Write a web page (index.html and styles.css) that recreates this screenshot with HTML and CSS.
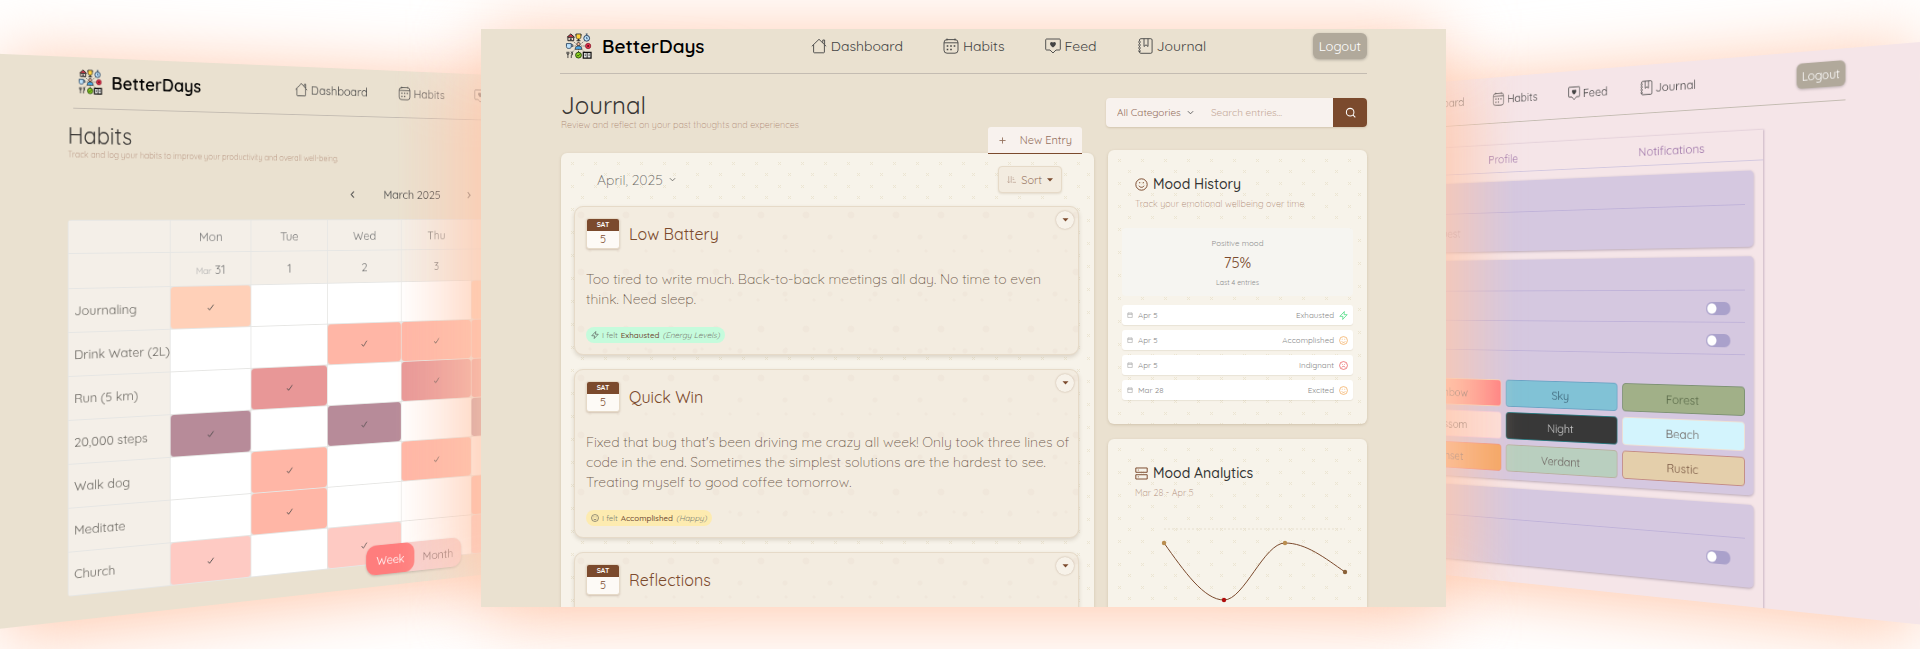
FILE: index.html
```html
<!DOCTYPE html>
<html lang="en">
<head>
<meta charset="utf-8">
<meta name="viewport" content="width=device-width, initial-scale=1">
<title>BetterDays</title>
<link rel="stylesheet" href="styles.css">
</head>
<body>
<svg class="sprite" aria-hidden="true">
  <symbol id="logo" viewBox="0 0 54 54">
    <g stroke="#333" stroke-width="1.2" stroke-dasharray="3 2"><path d="M27 27 11 13M27 27 43 13M27 27V12M27 27H10M27 27H44M27 27 11 43M27 27 43 43M27 27V44"/></g>
    <path d="M3 9 11 2l8 7" fill="#d33a4a" stroke="#222" stroke-width="2"/><path d="M5 9h12v7H5z" fill="#f3ded2" stroke="#222" stroke-width="2"/><path d="M9 11h4v5H9z" fill="#444"/>
    <path d="M22 2h10v5c0 4-2 6-5 6s-5-2-5-6zM20 4h2m10 0h2" fill="#ffd23c" stroke="#222" stroke-width="1.6"/><path d="M27 12v3m-4 1h8" stroke="#222" stroke-width="2"/>
    <circle cx="44" cy="11" r="6" fill="#bfe2fb" stroke="#24415f" stroke-width="2"/><path d="M44 2v3M42 2h4M44 8v4h2" stroke="#24415f" stroke-width="1.6" fill="none"/>
    <path d="M2 22h10v6c0 2-1 4-4 4H6c-3 0-4-2-4-4z" fill="#bfe2fb" stroke="#24415f" stroke-width="1.8"/><path d="M12 24h3v4h-3" fill="none" stroke="#24415f" stroke-width="1.6"/>
    <circle cx="27" cy="23" r="3.4" fill="#f2b99b" stroke="#222" stroke-width="1.4"/><path d="M20 34c0-5 3-7 7-7s7 2 7 7z" fill="#4aa8e8" stroke="#222" stroke-width="1.4"/>
    <circle cx="47" cy="27" r="5.5" fill="#e2324a" stroke="#7a1226" stroke-width="1.4"/><circle cx="47" cy="27" r="2" fill="#5d0d1c"/>
    <path d="M3 39v4c0 2 4 2 4 0v-4M5 39v13M11 39c4 1 4 6 1 7v6M14 39v7" fill="none" stroke="#333" stroke-width="1.8"/>
    <circle cx="27" cy="46" r="6" fill="#8ed321" stroke="#1d3b0a" stroke-width="1.8"/><path d="m24 46 2 2 4-4M27 38v2" fill="none" stroke="#1d3b0a" stroke-width="1.6"/>
    <path d="M37 40h16v12H37z" fill="#eee" stroke="#111" stroke-width="2.6"/><path d="M45 40v12M40 44h2M40 47h2M48 44h2M48 47h2" stroke="#111" stroke-width="1.8"/>
  </symbol>
  <symbol id="home" viewBox="0 0 16 16"><path d="M.8 8.300 8 1.300l7.200 7M2.600 6.800V14c0 .5.300.8.800.8h9.200c.5 0 .8-.300.800-.800V6.800M11.800 4.800V2h1.800v4.600" fill="none" stroke="currentColor" stroke-width=".9" stroke-linejoin="round"/></symbol>
  <symbol id="cal" viewBox="0 0 16 16"><rect x="1" y="1.600" width="14" height="13.600" rx="3" fill="none" stroke="currentColor" stroke-width=".9"/><path d="M1 4.800h14M4 .5v2M12 .5v2" stroke="currentColor" stroke-width=".9"/><path d="M7.200 8h1.600M10.700 8h1.600M3.700 11.500h1.600M7.200 11.500h1.600M3.700 8h1.600" stroke="currentColor" stroke-width="1.500"/></symbol>
  <symbol id="feed" viewBox="0 0 16 16"><path d="M1.500 1h13c.4 0 .8.400.8.800v9.400c0 .4-.4.800-.8.800H11l-3 3-3-3H1.500c-.4 0-.8-.400-.8-.800V1.800c0-.4.400-.800.800-.800z" fill="none" stroke="currentColor" stroke-width=".9"/><path d="M8 9.600C3 6.500 5.500 2.600 8 4.600c2.500-2 5 1.900 0 5z" fill="currentColor"/></symbol>
  <symbol id="book" viewBox="0 0 16 16"><path d="M2.500 3V2c0-.8.500-1.300 1.300-1.300h10c.8 0 1.300.500 1.300 1.300v12c0 .8-.500 1.300-1.300 1.300h-10c-.8 0-1.300-.500-1.300-1.300v-1M2.500 5v1M2.500 8v1M2.500 11v1M1 4h3M1 7h3M1 10h3M1 13h3M7 .7V8.500l2-1.700 2 1.700V.7" fill="none" stroke="currentColor" stroke-width=".9"/></symbol>
  <symbol id="smile" viewBox="0 0 16 16"><circle cx="8" cy="8" r="7" fill="none" stroke="currentColor" stroke-width="1.200"/><path d="M4.800 9.500c1.200 2.600 5.200 2.600 6.400 0M5.800 5v1.500M10.200 5v1.500" fill="none" stroke="currentColor" stroke-width="1.200"/></symbol>
  <symbol id="frown" viewBox="0 0 16 16"><circle cx="8" cy="8" r="7" fill="none" stroke="currentColor" stroke-width="1.200"/><path d="M4.800 11.500c1.200-2.600 5.200-2.600 6.400 0M5 5l1.500 1.500M11 5 9.500 6.500" fill="none" stroke="currentColor" stroke-width="1.200"/></symbol>
  <symbol id="bolt" viewBox="0 0 16 16"><path d="M9.500 1 1.500 9.500H7L6.500 15l8-8.500H9z" fill="none" stroke="currentColor" stroke-width="1.300" stroke-linejoin="round"/></symbol>
  <symbol id="day" viewBox="0 0 16 16"><path d="M2 3h12v11.500H2zM2 6.500h12M5 1v3M11 1v3" fill="none" stroke="currentColor" stroke-width="1.200"/></symbol>
  <symbol id="rows" viewBox="0 0 16 16"><path d="M1 1.200h14v5.300H1zM1 9.500h14v5.300H1zM3.500 3.800h1M3.500 12.100h1" fill="none" stroke="currentColor" stroke-width="1.200"/></symbol>
  <symbol id="search" viewBox="0 0 16 16"><circle cx="7.500" cy="7.500" r="5.500" fill="none" stroke="currentColor" stroke-width="1.500"/><path d="m11.500 11.500 3.500 3.500" stroke="currentColor" stroke-width="1.500"/></symbol>
  <symbol id="sort" viewBox="0 0 16 16"><path d="M3 2v12M.8 11.500 3 14l2.200-2.500M7.500 2v12M10 5h2M10 8h3M10 13h6" fill="none" stroke="currentColor" stroke-width="1.200"/></symbol>
  <symbol id="down" viewBox="0 0 16 16"><path d="m2 5 6 6 6-6" fill="none" stroke="currentColor" stroke-width="2"/></symbol>
  <symbol id="caret" viewBox="0 0 16 16"><path d="M0 3h16l-8 9z" fill="currentColor"/></symbol>
  <symbol id="tick" viewBox="0 0 16 16"><path d="m2 9 4 4 8-10" fill="none" stroke="currentColor" stroke-width="1.700"/></symbol>
  <symbol id="plus" viewBox="0 0 16 16"><path d="M8 1v14M1 8h14" stroke="currentColor" stroke-width="2"/></symbol>
</svg>

<main class="stage">
  <div class="side side--left">
    <div class="side__glow"></div>
    <section class="panel side__surface" aria-label="Habits">
      <header class="header">
        <a class="brand" href="#"><svg class="brand__logo"><use href="#logo"/></svg>BetterDays</a>
        <nav class="nav">
          <a class="nav__link" href="#"><svg class="nav__icon"><use href="#home"/></svg>Dashboard</a>
          <a class="nav__link" href="#"><svg class="nav__icon"><use href="#cal"/></svg>Habits</a>
          <a class="nav__link" href="#"><svg class="nav__icon"><use href="#feed"/></svg>Feed</a>
          <a class="nav__link" href="#"><svg class="nav__icon"><use href="#book"/></svg>Journal</a>
        </nav>
        <button class="logout" type="button">Logout</button>
      </header>
      <div class="habits">
        <h2 class="title">Habits</h2>
        <p class="subtitle">Track and log your habits to improve your productivity and overall well-being.</p>
        <div class="month">
          <button class="month__arrow" type="button" aria-label="Previous month"><svg class="month__icon month__icon--prev"><use href="#down"/></svg></button>
          <span>March 2025</span>
          <button class="month__arrow" type="button" aria-label="Next month"><svg class="month__icon month__icon--next"><use href="#down"/></svg></button>
        </div>
        <table class="grid">
          <thead>
            <tr class="grid__days"><th class="grid__name"></th><th>Mon</th><th>Tue</th><th>Wed</th><th>Thu</th><th></th><th></th><th></th></tr>
            <tr class="grid__dates"><th></th><th><small>Mar</small> 31</th><th>1</th><th>2</th><th>3</th><th></th><th></th><th></th></tr>
          </thead>
          <tbody>
            <tr><th>Journaling</th><td class="on peach"><svg><use href="#tick"/></svg></td><td></td><td></td><td></td><td class="on peach"></td><td></td><td></td></tr>
            <tr><th>Drink Water (2L)</th><td></td><td></td><td class="on coral"><svg><use href="#tick"/></svg></td><td class="on coral"><svg><use href="#tick"/></svg></td><td class="on coral"></td><td></td><td></td></tr>
            <tr><th>Run (5 km)</th><td></td><td class="on rose"><svg><use href="#tick"/></svg></td><td></td><td class="on rose"><svg><use href="#tick"/></svg></td><td class="on rose"></td><td></td><td></td></tr>
            <tr><th>20,000 steps</th><td class="on plum"><svg><use href="#tick"/></svg></td><td></td><td class="on plum"><svg><use href="#tick"/></svg></td><td></td><td class="on plum"></td><td></td><td></td></tr>
            <tr><th>Walk dog</th><td></td><td class="on coral"><svg><use href="#tick"/></svg></td><td></td><td class="on coral"><svg><use href="#tick"/></svg></td><td></td><td></td><td></td></tr>
            <tr><th>Meditate</th><td></td><td class="on coral"><svg><use href="#tick"/></svg></td><td></td><td></td><td class="on coral"></td><td></td><td></td></tr>
            <tr><th>Church</th><td class="on blush"><svg><use href="#tick"/></svg></td><td></td><td class="on blush"><svg><use href="#tick"/></svg></td><td></td><td class="on blush"></td><td></td><td></td></tr>
          </tbody>
        </table>
      </div>
      <div class="range">
        <button class="range__item range__item--active" type="button">Week</button>
        <button class="range__item" type="button">Month</button>
      </div>
    </section>
  </div>

  <div class="side side--right">
    <div class="side__glow"></div>
    <section class="panel side__surface" aria-label="Settings">
      <header class="header">
        <a class="brand" href="#"><svg class="brand__logo"><use href="#logo"/></svg>BetterDays</a>
        <nav class="nav">
          <a class="nav__link" href="#"><svg class="nav__icon"><use href="#home"/></svg>Dashboard</a>
          <a class="nav__link" href="#"><svg class="nav__icon"><use href="#cal"/></svg>Habits</a>
          <a class="nav__link" href="#"><svg class="nav__icon"><use href="#feed"/></svg>Feed</a>
          <a class="nav__link" href="#"><svg class="nav__icon"><use href="#book"/></svg>Journal</a>
        </nav>
        <button class="logout" type="button">Logout</button>
      </header>
      <div class="settings">
        <div class="tabs"><button class="tab tab--second" type="button">Profile</button><button class="tab" type="button">Notifications</button></div>
        <div class="box"><div class="row row--head"></div><div class="row row--tall"><span class="row__text">Guest</span></div></div>
        <div class="box">
          <div class="row row--head"></div>
          <div class="row"><input class="switch" type="checkbox" aria-label="Option one"></div>
          <div class="row"><input class="switch" type="checkbox" aria-label="Option two"></div>
          <div class="themes">
            <button class="theme theme--rainbow" type="button">Rainbow</button><button class="theme theme--sky" type="button">Sky</button><button class="theme theme--forest" type="button">Forest</button>
            <button class="theme theme--blossom" type="button">Blossom</button><button class="theme theme--night" type="button">Night</button><button class="theme theme--beach" type="button">Beach</button>
            <button class="theme theme--sunset" type="button">Sunset</button><button class="theme theme--verdant" type="button">Verdant</button><button class="theme theme--rustic" type="button">Rustic</button>
          </div>
        </div>
        <div class="box"><div class="row row--head"></div><div class="row row--last"><input class="switch" type="checkbox" aria-label="Option three"></div></div>
      </div>
    </section>
  </div>

  <div class="front">
    <div class="front__glow"></div>
    <section class="panel front__surface" aria-label="Journal">
      <header class="header">
        <a class="brand" href="#"><svg class="brand__logo"><use href="#logo"/></svg>BetterDays</a>
        <nav class="nav">
          <a class="nav__link" href="#"><svg class="nav__icon"><use href="#home"/></svg>Dashboard</a>
          <a class="nav__link" href="#"><svg class="nav__icon"><use href="#cal"/></svg>Habits</a>
          <a class="nav__link" href="#"><svg class="nav__icon"><use href="#feed"/></svg>Feed</a>
          <a class="nav__link" href="#"><svg class="nav__icon"><use href="#book"/></svg>Journal</a>
        </nav>
        <button class="logout" type="button">Logout</button>
      </header>

      <div class="journal">
        <div class="journal__main">
          <h1 class="title">Journal</h1>
          <p class="subtitle">Review and reflect on your past thoughts and experiences</p>
          <button class="new" type="button"><svg class="new__icon"><use href="#plus"/></svg>New Entry</button>
          <div class="card feed">
            <div class="feed__bar">
              <button class="feed__month" type="button">April, 2025 <svg><use href="#down"/></svg></button>
              <button class="sort" type="button"><svg class="sort__icon"><use href="#sort"/></svg>Sort<svg class="sort__caret"><use href="#caret"/></svg></button>
            </div>
            <article class="entry">
              <button class="entry__menu" type="button" aria-label="Entry menu"><svg><use href="#caret"/></svg></button>
              <div class="entry__head"><div class="date"><span class="date__day">SAT</span><span class="date__num">5</span></div><h2 class="entry__title">Low Battery</h2></div>
              <p class="entry__text">Too tired to write much. Back-to-back meetings all day. No time to even think. Need sleep.</p>
              <span class="felt felt--green"><svg><use href="#bolt"/></svg>I felt <b>Exhausted</b> <i>(Energy Levels)</i></span>
            </article>
            <article class="entry">
              <button class="entry__menu" type="button" aria-label="Entry menu"><svg><use href="#caret"/></svg></button>
              <div class="entry__head"><div class="date"><span class="date__day">SAT</span><span class="date__num">5</span></div><h2 class="entry__title">Quick Win</h2></div>
              <p class="entry__text">Fixed that bug that's been driving me crazy all week! Only took three lines of code in the end. Sometimes the simplest solutions are the hardest to see. Treating myself to good coffee tomorrow.</p>
              <span class="felt felt--yellow"><svg><use href="#smile"/></svg>I felt <b>Accomplished</b> <i>(Happy)</i></span>
            </article>
            <article class="entry">
              <button class="entry__menu" type="button" aria-label="Entry menu"><svg><use href="#caret"/></svg></button>
              <div class="entry__head"><div class="date"><span class="date__day">SAT</span><span class="date__num">5</span></div><h2 class="entry__title">Reflections</h2></div>
            </article>
          </div>
        </div>

        <aside class="journal__aside">
          <form class="search">
            <label class="search__cat"><select class="search__select" aria-label="Category"><option>All Categories</option></select><svg><use href="#down"/></svg></label>
            <input class="search__input" type="text" placeholder="Search entries..." aria-label="Search entries">
            <button class="search__go" type="button" aria-label="Search"><svg><use href="#search"/></svg></button>
          </form>
          <section class="card mood">
            <h2 class="mood__title"><svg><use href="#smile"/></svg>Mood History</h2>
            <p class="subtitle mood__sub">Track your emotional wellbeing over time</p>
            <div class="stat"><span>Positive mood</span><strong>75%</strong><small>Last 4 entries</small></div>
            <ul class="log">
              <li><svg><use href="#day"/></svg>Apr 5<span>Exhausted</span><svg class="green"><use href="#bolt"/></svg></li>
              <li><svg><use href="#day"/></svg>Apr 5<span>Accomplished</span><svg class="orange"><use href="#smile"/></svg></li>
              <li><svg><use href="#day"/></svg>Apr 5<span>Indignant</span><svg class="red"><use href="#frown"/></svg></li>
              <li><svg><use href="#day"/></svg>Mar 28<span>Excited</span><svg class="orange"><use href="#smile"/></svg></li>
            </ul>
          </section>
          <section class="card mood">
            <h2 class="mood__title"><svg><use href="#rows"/></svg>Mood Analytics</h2>
            <p class="subtitle mood__sub">Mar 28 - Apr 5</p>
            <svg class="chart" viewBox="0 0 231 90" role="img" aria-label="Mood chart">
              <path d="M42 10H223" stroke="#e6dfcf" stroke-dasharray="2 2"/>
              <path d="M42 24C62 52 82 81 102 81S142 24 163 24 203 39 223 53" fill="none" stroke="#7b4a2d" stroke-width="1"/>
              <circle cx="42" cy="24" r="2.200" fill="#b98d4f"/><circle cx="102" cy="81" r="2.200" fill="#b00d0d"/><circle cx="163" cy="24" r="2.200" fill="#b98d4f"/><circle cx="223" cy="53" r="2.200" fill="#8a6138"/>
            </svg>
          </section>
        </aside>
      </div>
    </section>
  </div>
</main>
</body>
</html>
```

FILE: styles.css
```css
* { box-sizing: border-box; }
body {
  margin: 0;
  background: #fff;
  font-family: Quicksand, Lato, "Open Sans", sans-serif;
  font-size: 14px;
  color: #444;
}
h1, h2, p, ul { margin: 0; padding: 0; font-weight: 400; }
ul { list-style: none; }
a { color: inherit; text-decoration: none; }
button, input, select { font: inherit; color: inherit; border: 0; background: none; padding: 0; margin: 0; }
.sprite { display: none; }

.panel { overflow: hidden; background: #eae1d0; padding: 4px 79px 0; }

/* Stage: one flat panel between two panels turned in perspective */
.stage {
  position: relative;
  display: grid;
  grid-template-columns: 481fr 965fr 474fr;
  height: 100vh;
  min-height: 600px;
  padding: 29px 0 42px;
  overflow: hidden;
}
.front { grid-column: 2; position: relative; min-height: 0; }
.front__surface { position: relative; height: 100%; }
.front__glow, .side__glow {
  position: absolute;
  inset: 4px 4px -10px 4px;
  background: #ffc8ac;
  filter: blur(36px);
}
.side { position: absolute; width: calc(50% + 5px); }
.side__surface { position: relative; height: 100%; padding-top: 12px; }
.side--left {
  left: 0;
  top: 53px;
  bottom: 18px;
  transform-origin: -20px 160px;
  transform: perspective(1000px) rotateY(15deg);
}
.side--left .side__surface { mask-image: linear-gradient(to right, #000 48%, transparent 75%); }
.side--left .nav { margin-left: 12px; }
.side--right {
  right: -1px;
  top: 44px;
  bottom: 27px;
  transform-origin: calc(100% - 25px) 257px;
  transform: perspective(1000px) rotateY(-18deg);
}
.side--right .side__surface {
  background: #f5e5e8;
  mask-image: linear-gradient(to left, #000 50%, transparent 73%);
}
.side--right .nav { margin-right: 20px; }

/* Header */
.header {
  display: flex;
  align-items: center;
  justify-content: space-between;
  padding-bottom: 14px;
  border-bottom: 1px solid #c4bcb2;
}
.brand { display: flex; align-items: center; gap: 10px; padding-left: 5px; font-size: 19px; line-height: 26px; font-weight: 600; color: #000; }
.brand__logo { width: 27px; height: 26px; }
.nav { display: flex; gap: 40px; }
.nav__link { display: flex; align-items: center; gap: 4px; font-size: 14px; line-height: 18px; }
.nav__icon { width: 16px; height: 16px; }
.logout {
  height: 26px;
  padding: 0 6px;
  border-radius: 6px;
  background: #b1a99b;
  color: #fff;
  font-size: 13px;
  box-shadow: 0 1px 3px rgba(0, 0, 0, .25);
}
.title { font-size: 24px; line-height: 28px; color: #3a3836; }
.subtitle { font-size: 9px; line-height: 12px; font-weight: 300; color: #b08b77; }

/* Habits */
.habits { margin: 0 36px 0 -6px; padding-top: 13px; }
.month { display: flex; align-items: center; justify-content: center; gap: 34px; height: 40px; margin: 13px 0 8px 49px; }
.month__arrow { width: 10px; height: 14px; }
.month__icon { width: 9px; height: 9px; display: block; }
.month__icon--prev { transform: rotate(90deg); }
.month__icon--next { transform: rotate(-90deg); }
.grid { width: 100%; table-layout: fixed; border-collapse: separate; border-spacing: 1px; background: #e6e6e4; border-radius: 4px; color: #777; font-size: 14px; }
.grid th, .grid td { height: 44px; padding: 0; font-weight: 400; text-align: center; background: #f4efe8; }
.grid tbody td { background: #fff; }
.grid tbody th { text-align: left; padding-left: 6px; font-size: 14px; white-space: nowrap; color: #6b6862; }
.grid .grid__name { width: 113px; }
.grid .grid__days th { height: 33px; }
.grid .grid__dates th { height: 35px; }
.grid small { font-size: 10px; color: #aaa; }
.grid td svg { width: 9px; height: 9px; color: #444; }
.grid td.on { border-radius: 4px; }
.grid td.peach { background: #ffd0b8; }
.grid td.coral { background: #ffb6a6; }
.grid td.rose { background: #e89797; }
.grid td.plum { background: #b78b99; }
.grid td.blush { background: #fecac3; }
.range {
  position: absolute;
  left: 426px;
  bottom: 13px;
  display: flex;
  background: #f7d0ce;
  border-radius: 12px;
  box-shadow: 0 1px 3px rgba(0, 0, 0, .2);
}
.range__item { width: 63px; height: 33px; border-radius: 12px; color: #8d6d6c; }
.range__item--active { background: #ff7d7d; color: #fff; }

/* Settings */
.settings { margin: 25px 92px 0 60px; padding: 0 11px; height: 600px; box-shadow: 1px 0 2px rgba(90, 60, 110, .3); }
.tabs { display: grid; grid-template-columns: repeat(3, 1fr); margin: 0 -11px 10px; border-bottom: 1px solid #d3c8df; }
.tab { height: 31px; color: #9a70a6; }
.tab--second { grid-column: 2; }
.box { margin-bottom: 10px; padding: 0 10px; border-radius: 5px; background: #d5c8e0; box-shadow: 0 1px 3px rgba(60, 40, 80, .35); }
.row { display: flex; align-items: center; justify-content: flex-end; height: 34px; padding-right: 17px; border-bottom: 1px solid #c0b3d9; }
.row--head { height: 36px; }
.box:nth-of-type(3) .row { padding-top: 4px; }
.row--tall { height: 44px; justify-content: flex-start; border: 0; padding-left: 210px; color: #a893a8; }
.row--last { height: 51px; border: 0; padding-bottom: 8px; }
.switch { appearance: none; width: 29px; height: 14px; border-radius: 7px; background: radial-gradient(circle at 7px 7px, #fff 5px, transparent 6px), #aaa1cb; }
.themes { display: grid; grid-template-columns: repeat(4, 1fr); gap: 6px; padding: 33px 0 9px; }
.theme { height: 31px; border: 1px solid #c9b4d6; border-radius: 4px; color: #6d6460; }
.theme--rainbow, .theme--blossom, .theme--sunset { grid-column: 2; }
.theme--rainbow { background: linear-gradient(90deg, #ffe0b0, #ff7d80); border-color: #f5d2b8; }
.theme--sky { background: #81c2d6; border-color: #6ba3c4; color: #41687c; }
.theme--forest { background: #a1b088; border-color: #7e9275; color: #586847; }
.theme--blossom { background: #fce0dc; border-color: #f6cfe0; }
.theme--night { background: #383838; border-color: #2d7a80; color: #ccc; }
.theme--beach { background: #d3f4fd; border-color: #eee0d4; }
.theme--sunset { background: #f4a45f; border-color: #f0907a; }
.theme--verdant { background: #b9cfbf; border-color: #b9b0a0; }
.theme--rustic { background: #e4cfab; border-color: #c38c86; color: #7b5a45; }

/* Journal */
.journal { display: grid; grid-template-columns: 533fr 259fr; gap: 14px; padding: 17px 0 0 1px; }
.journal__main { display: flex; flex-direction: column; }
.card {
  border-radius: 6px;
  box-shadow: 0 1px 3px rgba(120, 90, 50, .22);
  background: #f7f3ea url("data:image/svg+xml,%3Csvg xmlns='http://www.w3.org/2000/svg' width='23' height='23'%3E%3Cpath d='M10 9l3 3m0-3l-3 3M20 20l3 3m0-3l-3 3' stroke='%23ece5d2' fill='none'/%3E%3C/svg%3E");
}
.new {
  align-self: flex-end;
  position: relative;
  display: flex;
  align-items: center;
  gap: 14px;
  height: 27px;
  margin: -4px 12px -1px 0;
  padding: 0 10px 0 11px;
  border-bottom: 1px solid #7b4a2d;
  border-radius: 3px 3px 0 0;
  background: #f8f2ee;
  color: #94705d;
  font-size: 11px;
}
.new__icon { width: 7px; height: 7px; }
.feed { padding: 13px 15px 20px 13px; }
.feed__bar { display: flex; align-items: center; justify-content: space-between; height: 27px; margin: 0 17px 13px 23px; }
.feed__month { font-size: 14px; font-weight: 300; color: #6b6a66; }
.feed__month svg { width: 7px; height: 7px; margin: 0 0 2px 2px; }
.sort { display: flex; align-items: center; gap: 5px; height: 27px; padding: 0 8px; border: 1px solid #e6dac8; border-radius: 4px; background: #f3ece0; color: #a07e6b; font-size: 11px; box-shadow: 0 1px 2px rgba(120, 90, 50, .15); }
.sort__icon { width: 9px; height: 9px; opacity: .7; }
.sort__caret { width: 6px; height: 6px; color: #7b4a2d; }
.entry {
  position: relative;
  margin-bottom: 14px;
  padding: 11px 6px 11px 11px;
  border: 1px solid #e6dac8;
  border-radius: 9px;
  box-shadow: 0 2px 4px rgba(100, 80, 50, .2);
  background:
    radial-gradient(circle at 6px 8px, #f0e7db 3px, transparent 4px) 0 0 / 45px 57px,
    radial-gradient(circle at 30px 30px, #f0e7db 2px, transparent 3px) 0 0 / 45px 57px,
    radial-gradient(circle at 15px 44px, #f0e7db 1px, transparent 2px) 0 0 / 28px 49px,
    #f3ece0;
  min-height: 149px;
}
.entry__menu { position: absolute; right: 4px; top: 4px; width: 18px; height: 18px; border-radius: 50%; background: #f7f2e9; box-shadow: 0 0 2px rgba(120, 80, 50, .4); color: #7b4a2d; display: grid; place-items: center; }
.entry__menu svg { width: 7px; height: 6px; }
.entry__head { display: flex; align-items: center; gap: 9px; }
.date { width: 34px; border: 1px solid #e6dac8; border-radius: 3px; overflow: hidden; background: #fdfaf6; text-align: center; color: #7b4a2d; box-shadow: 0 1px 2px rgba(120, 80, 50, .25); }
.date__day { display: block; background: #7b4a2d; color: #fff; font-size: 7px; line-height: 12px; font-weight: 700; }
.date__num { display: block; font-size: 11px; line-height: 17px; }
.entry__title { font-size: 16px; line-height: 20px; color: #7b4a2d; }
.entry__text { margin: 20px 0 18px; font-size: 14px; line-height: 20px; font-weight: 300; color: #6f5b4c; }
.felt { display: flex; align-items: center; gap: 3px; width: fit-content; height: 16px; padding: 0 5px; border-radius: 8px; font-size: 8px; color: #7d8578; }
.felt svg { width: 8px; height: 8px; color: #555; }
.felt b { color: #6f4a33; font-weight: 500; }
.felt--green { background: #c5fbdc; }
.felt--yellow { background: #fdebb0; }

.journal__aside { min-width: 0; }
.search { display: flex; height: 29px; margin: 7px 0 23px -2px; background: #f8f2ee; border-radius: 4px; box-shadow: 0 1px 2px rgba(120, 90, 50, .2); font-size: 10px; color: #94705d; }
.search__cat { display: flex; align-items: center; padding-left: 11px; width: 94px; flex: none; }
.search__cat svg { width: 7px; height: 7px; flex: none; color: #555; margin-right: 6px; }
.search__select { appearance: none; flex: 1; min-width: 0; }
.search__input { flex: 1; min-width: 0; padding-left: 11px; }
.search__input::placeholder { color: #c4a898; }
.search__go { width: 34px; flex: none; border-radius: 0 4px 4px 0; background: #7b4a2d; color: #fff; display: grid; place-items: center; }
.search__go svg { width: 11px; height: 11px; }
.mood { padding: 24px 14px 24px; margin-bottom: 15px; }
.mood__title { display: flex; align-items: center; gap: 5px; padding-left: 13px; font-size: 14px; line-height: 20px; font-weight: 500; color: #333; }
.mood__title svg { width: 13px; height: 13px; color: #7b4a2d; }
.mood__sub { margin-top: 4px; padding-left: 13px; }
.stat { display: flex; flex-direction: column; align-items: center; margin: 18px 0 9px; padding: 10px 0 8px; border-radius: 4px; background: #f6f5f1; font-size: 8px; line-height: 10px; color: #8d8d8d; }
.stat strong { font-size: 15px; line-height: 18px; font-weight: 400; color: #7b4a2d; margin: 6px 0; }
.stat small { font-size: 7px; }
.log { display: grid; gap: 5px; }
.log li { display: flex; align-items: center; height: 20px; padding: 0 5px; border-radius: 3px; background: #fff; font-size: 8px; color: #888; box-shadow: 0 1px 1px rgba(120, 90, 50, .1); }
.log svg { width: 6px; height: 6px; margin-right: 5px; }
.log span { margin-left: auto; }
.log .green, .log .orange, .log .red { width: 9px; height: 9px; margin: 0 0 0 5px; }
.green { color: #3fd978; }
.orange { color: #f2a24a; }
.red { color: #e5484d; }
.chart { display: block; width: 100%; margin-top: 20px; }
```
